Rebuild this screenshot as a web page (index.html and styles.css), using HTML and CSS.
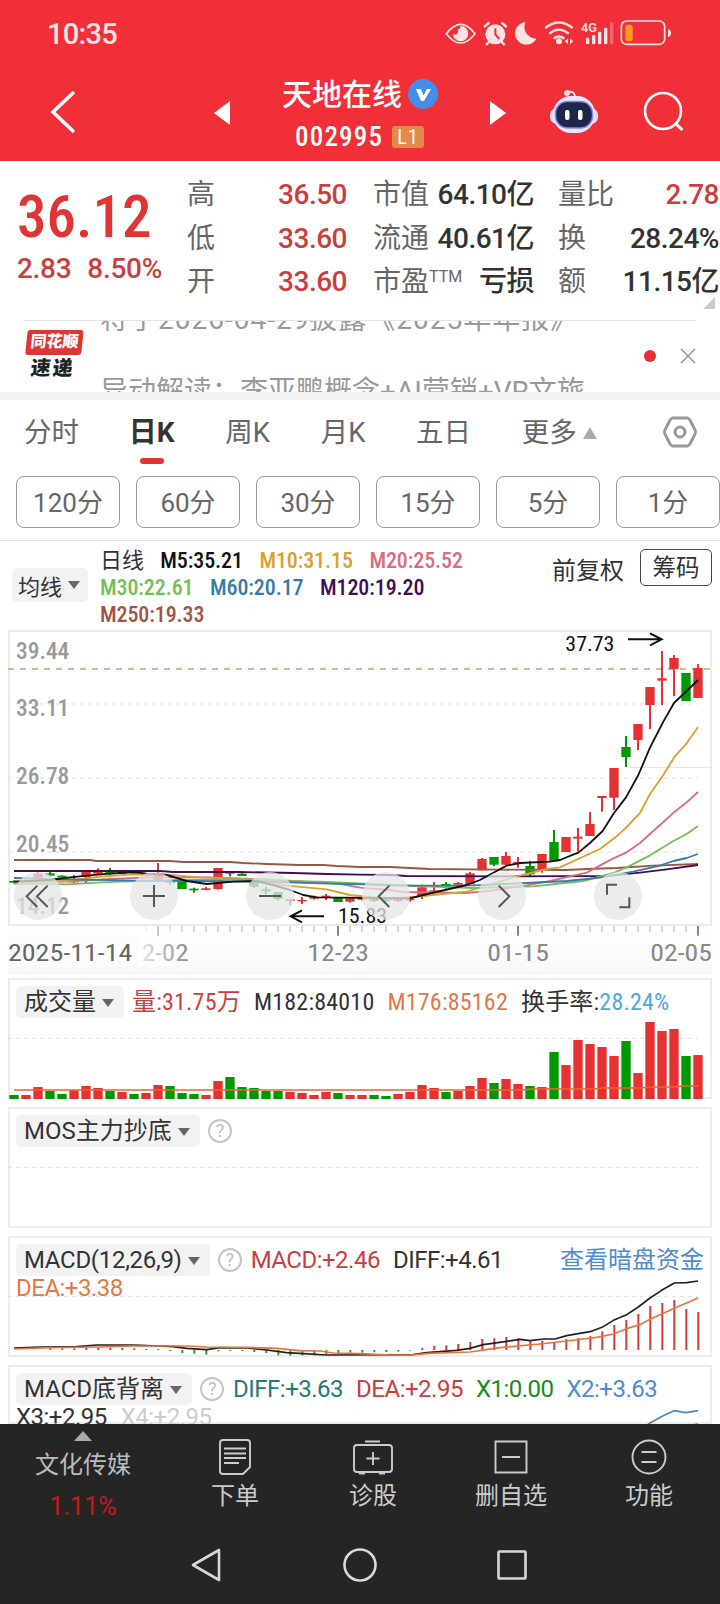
FILE: index.html
```html
<!DOCTYPE html>
<html lang="zh-CN">
<head>
    <meta charset="utf-8">
    <title>天地在线 002995</title>
    <link rel="stylesheet" href="styles.css">
</head>
<body>
    <header class="header">
        <div class="status-bar">
            <span class="clock">10:35</span>
            <svg class="status-icons" width="230" height="30" viewBox="0 0 690 90">
                <g fill="none" stroke="#ffe3e3" stroke-width="5">
                    <path d="M7 50Q50-6 93 50Q50 106 7 50z"/>
                    <path d="M304 33Q345 0 386 33M316 50Q345 26 374 50M329 65Q345 52 361 65" stroke-width="7"/>
                    <rect x="532" y="12" width="130" height="70" rx="16"/>
                </g>
                <g fill="#ffe3e3">
                    <path d="M50 27a23 23 0 1 1-23 23q7 5 13 0q5-8 1-15q8 4 9-8z"/>
                    <circle cx="154" cy="52" r="30"/>
                    <path d="M120 30l16-14M188 30l-16-14M136 74l-10 10M172 74l10 10" stroke="#ffe3e3" stroke-width="7"/>
                    <path d="M154 34v18l12 14" fill="none" stroke="#f12f38" stroke-width="6"/>
                    <path d="M244 15a34 34 0 1 0 33 50a36 36 0 0 1-33-50z"/>
                    <circle cx="345" cy="73" r="9"/>
                    <path d="M362 73l10-8v16zM388 73l-10-8v16z"/>
                    <rect x="426" y="62" width="10" height="20" rx="4"/>
                    <rect x="444" y="54" width="10" height="28" rx="4"/>
                    <rect x="462" y="44" width="10" height="38" rx="4"/>
                    <rect x="480" y="32" width="10" height="50" rx="4"/>
                    <rect x="498" y="16" width="10" height="66" rx="4" opacity=".3"/>
                    <path d="M672 36q9 2 9 12t-9 12z"/>
                    <text x="411" y="46" font-size="40" textLength="48" lengthAdjust="spacingAndGlyphs" font-weight="600">4G</text>
                </g>
                <rect x="544" y="23" width="22" height="50" rx="8" fill="#ff9a1f"/>
            </svg>
        </div>
        <div class="title-bar">
            <svg class="back" width="30" height="46" viewBox="0 0 30 46"><path d="M25 3L4 23L25 43" fill="none" stroke="#fff" stroke-width="3.6"/></svg>
            <svg class="prev" width="16" height="24" viewBox="0 0 16 24"><path d="M0 12L16 0v24z" fill="#fff"/></svg>
            <div class="stock">
                <div class="stock-name">天地在线
                    <svg width="30" height="30" viewBox="0 0 30 30"><circle cx="15" cy="15" r="15" fill="#438ee8"/><path d="M8 10h5l2.500 6.500L19 10h4l-7 12h-3z" fill="#fff"/></svg>
                </div>
                <div class="stock-code"><span>002995</span><span class="level">L1</span></div>
            </div>
            <svg class="next" width="16" height="24" viewBox="0 0 16 24"><path d="M16 12L0 0v24z" fill="#fff"/></svg>
            <svg class="robot" width="50" height="46" viewBox="0 0 50 46">
                <path d="M26 8q0-6-7-5" fill="none" stroke="#ffe0e4" stroke-width="2"/><circle cx="18" cy="4" r="3" fill="#ffd6dc"/>
                <rect x="1" y="19" width="48" height="16" rx="7" fill="#d9dcfb"/>
                <rect x="4" y="7" width="42" height="37" rx="18" fill="#e9e7fd"/>
                <rect x="6.500" y="12.500" width="37" height="26.500" rx="12" fill="#1d2748" stroke="#8d83f0" stroke-width="1.500"/>
                <rect x="16" y="21" width="4.500" height="10" rx="2" fill="#fff"/><rect x="29" y="21" width="4.500" height="10" rx="2" fill="#fff"/>
            </svg>
            <svg class="search" width="42" height="42" viewBox="0 0 42 42"><circle cx="20" cy="20" r="18" fill="none" stroke="#fff" stroke-width="2.600"/><path d="M32 32l7.500 7" stroke="#fff" stroke-width="3"/></svg>
        </div>
    </header>

    <section class="quote">
        <div class="price">
            <div class="last">36.12</div>
            <div class="change"><span>2.83</span><span>8.50%</span></div>
        </div>
        <dl class="stats stats-a">
            <dt>高</dt><dd class="up">36.50</dd>
            <dt>低</dt><dd class="up">33.60</dd>
            <dt>开</dt><dd class="up">33.60</dd>
        </dl>
        <dl class="stats stats-b">
            <dt>市值</dt><dd>64.10亿</dd>
            <dt>流通</dt><dd>40.61亿</dd>
            <dt>市盈<sup>TTM</sup></dt><dd>亏损</dd>
        </dl>
        <dl class="stats stats-c">
            <dt>量比</dt><dd class="up">2.78</dd>
            <dt>换</dt><dd>28.24%</dd>
            <dt>额</dt><dd>11.15亿</dd>
        </dl>
        <svg class="corner" width="12" height="12"><path d="M12 0v12H0z" fill="#ccc"/></svg>
    </section>

    <section class="news">
        <div class="news-logo"><span class="brand">同花顺</span><span class="express">速递</span></div>
        <div class="news-text">
            <p class="report">将于2026-04-29披露《2025年年报》</p>
            <p>异动解读：李亚鹏概念+AI营销+VR文旅</p>
        </div>
        <span class="dot"></span>
        <svg class="close" width="18" height="18"><path d="M2 2l14 14M16 2L2 16" stroke="#999" stroke-width="1.600"/></svg>
    </section>

    <nav class="tabs">
        <span>分时</span>
        <span class="active">日K</span>
        <span>周K</span>
        <span>月K</span>
        <span>五日</span>
        <span class="more">更多<svg width="14" height="12"><path d="M7 0l7 12H0z" fill="#aaa"/></svg></span>
        <svg class="settings" width="34" height="32" viewBox="0 0 34 32"><path d="M9.500 2h15l2.500 2l5 10q1 2 0 4l-5 10l-2.500 2h-15L7 28L2 18q-1-2 0-4L7 4z" fill="none" stroke="#999" stroke-width="2.800"/><circle cx="17" cy="16" r="5" fill="none" stroke="#999" stroke-width="3"/></svg>
    </nav>
    <div class="periods">
        <button>120分</button><button>60分</button><button>30分</button><button>15分</button><button>5分</button><button>1分</button>
    </div>

    <div class="ma-bar">
        <span class="pill">均线<i class="caret"></i></span>
        <div class="ma-values">
            <div><b>日线</b><span class="m5">M5:35.21</span><span class="m10">M10:31.15</span><span class="m20">M20:25.52</span></div>
            <div><span class="m30">M30:22.61</span><span class="m60">M60:20.17</span><span class="m120">M120:19.20</span></div>
            <div><span class="m250">M250:19.33</span></div>
        </div>
        <span class="adjust">前复权</span>
        <span class="chips">筹码</span>
    </div>

    <!-- charts use a 3x coordinate system, one candle every 36 units -->
    <svg id="kline" class="kline" width="720" height="348" viewBox="0 15 2160 1044"></svg>

    <section class="panel">
        <svg id="volume" class="chart" viewBox="24 24 2112 363"></svg>
        <div class="panel-head vol-head">
            <span class="pill">成交量<i class="caret"></i></span>
            <span class="up">量:31.75万</span><span>M182:84010</span><span class="orange">M176:85162</span><span>换手率:<em>28.24%</em></span>
        </div>
    </section>
    <section class="panel">
        <svg id="mos" class="chart" viewBox="24 411 2112 363"></svg>
        <div class="panel-head">
            <span class="pill">MOS主力抄底<i class="caret"></i></span><span class="help">?</span>
        </div>
    </section>
    <section class="panel">
        <svg id="macd" class="chart" viewBox="24 18 2112 363"></svg>
        <div class="panel-head macd-head">
            <span class="pill">MACD(12,26,9)<i class="caret"></i></span><span class="help">?</span>
            <span class="up">MACD:+2.46</span><span>DIFF:+4.61</span>
            <a class="link">查看暗盘资金</a>
            <span class="second-row orange">DEA:+3.38</span>
        </div>
    </section>
    <section class="panel panel-last">
        <svg id="diverge" class="chart" viewBox="24 405 2112 177"></svg>
        <div class="panel-head">
            <span class="pill">MACD底背离<i class="caret"></i></span><span class="help">?</span>
            <span class="teal">DIFF:+3.63</span><span class="up">DEA:+2.95</span><span class="down">X1:0.00</span><span class="blue">X2:+3.63</span>
            <span class="second-row">X3:+2.95<span class="faint">X4:+2.95</span></span>
        </div>
    </section>

    <footer class="footer">
        <div class="toolbar">
            <div class="sector">
                <svg width="18" height="10"><path d="M9 0l9 10H0z" fill="#aaa"/></svg>
                <span>文化传媒</span>
                <span class="sector-change">1.11%</span>
            </div>
            <div class="tool">
                <svg width="36" height="36" viewBox="0 0 36 36"><path d="M6 1h24q3 0 3 3v24l-7 7H6q-3 0-3-3V4q0-3 3-3zM7 9.500h22M7 14.500h22M7 19h22M7 24h15"/></svg>
                <span>下单</span>
            </div>
            <div class="tool">
                <svg width="40" height="36" viewBox="0 0 40 36"><path d="M12 2.500h15M4 6h32q3 0 3 3v21q0 3-3 3H4q-3 0-3-3V9q0-3 3-3zM20 13v13M13.500 19.500h13M6 34.500h6M26 34.500h6"/></svg>
                <span>诊股</span>
            </div>
            <div class="tool">
                <svg width="36" height="36" viewBox="0 0 36 36"><path d="M2.500 2.500h31v31h-31zM9 18h18"/></svg>
                <span>删自选</span>
            </div>
            <div class="tool">
                <svg width="36" height="36" viewBox="0 0 36 36"><circle cx="18" cy="18" r="16.500"/><path d="M10.500 13h15M10.500 23h15"/></svg>
                <span>功能</span>
            </div>
        </div>
        <div class="nav-keys">
            <svg width="36" height="36" viewBox="0 0 36 36"><path d="M3 18L29 3v30z"/></svg>
            <svg width="36" height="36" viewBox="0 0 36 36"><circle cx="18" cy="18" r="15.500"/></svg>
            <svg width="36" height="36" viewBox="0 0 36 36"><rect x="4.500" y="4.500" width="27" height="27" rx="1"/></svg>
        </div>
    </footer>

    <script src="charts.js"></script>
</body>
</html>
```
FILE: charts.js
```js
const RED = "#e43131";
const GREEN = "#009a00";

// x of the n-th candle
const cx = (n) => 42 + 36 * n;

const line = (points, color, width = 5) =>
    `<polyline points="${points}" fill="none" stroke="${color}" stroke-width="${width}" stroke-linejoin="round"/>`;

const dash = (y, from = 24) =>
    `<path d="M${from} ${y}H2094" stroke="#ddd" stroke-width="3" stroke-dasharray="12 12"/>`;

const text = (str, x, y, width, color, size = 69, weight = 400) =>
    `<text x="${x}" y="${y}" textLength="${width}" lengthAdjust="spacingAndGlyphs" fill="${color}" font-size="${size}" font-weight="${weight}">${str}</text>`;

// [direction, high, body top, body bottom, low]
const candles = [
    ["g", 766, 768, 773, 775], ["r", 764, 766, 772, 774], ["r", 740, 746, 758, 762], ["g", 740, 745, 752, 756],
    ["g", 751, 752, 758, 758], ["r", 750, 765, 772, 773], ["r", 739, 739, 756, 774], ["r", 730, 740, 746, 750],
    ["g", 729, 737, 745, 750], ["r", 740, 741, 747, 748], ["g", 738, 740, 746, 750], ["r", 745, 748, 753, 758],
    ["r", 714, 744, 764, 766], ["g", 764, 768, 773, 779], ["g", 771, 771, 792, 792], ["g", 788, 791, 796, 803],
    ["r", 786, 790, 795, 796], ["r", 729, 729, 792, 794], ["g", 740, 741, 746, 754], ["g", 745, 746, 753, 753],
    ["g", 765, 765, 785, 789], ["g", 785, 793, 799, 808], ["g", 801, 801, 822, 826], ["r", 822, 823, 828, 840],
    ["r", 816, 825, 829, 837], ["r", 812, 815, 821, 824], ["r", 807, 812, 818, 825], ["g", 818, 818, 831, 831],
    ["r", 820, 820, 830, 833], ["r", 816, 819, 824, 826], ["g", 820, 822, 828, 831], ["g", 820, 822, 828, 831],
    ["r", 818, 822, 828, 831], ["r", 813, 822, 826, 830], ["r", 779, 787, 814, 822], ["r", 771, 796, 801, 801],
    ["g", 771, 777, 787, 791], ["r", 771, 774, 779, 784], ["r", 741, 745, 778, 778], ["r", 699, 702, 736, 736],
    ["g", 696, 696, 719, 723], ["r", 681, 693, 719, 721], ["r", 696, 711, 717, 728], ["g", 708, 723, 748, 754],
    ["r", 687, 687, 732, 743], ["g", 615, 651, 708, 708], ["r", 636, 636, 681, 681], ["r", 609, 635, 641, 678],
    ["r", 561, 597, 633, 633], ["r", 513, 513, 519, 560], ["r", 429, 429, 518, 555], ["g", 333, 366, 396, 426],
    ["r", 297, 297, 345, 375], ["r", 186, 186, 240, 312], ["r", 78, 160, 167, 240], ["r", 90, 99, 132, 213],
    ["g", 144, 144, 228, 228], ["r", 117, 129, 219, 219]
];

const averages = [
    ["#985848", "42,705 270,705 290,708 510,708 550,711 690,711 730,714 800,717 900,720 970,720 1010,723 1080,726 1170,726 1290,732 1500,734 1700,735 1760,732 1850,729 1960,722 2094,717"],
    ["#410f50", "42,738 480,738 520,741 720,741 880,744 980,747 1080,749 1170,750 1220,753 1500,754 1820,753 1920,743 2000,733 2094,720"],
    ["#db6c80", "42,770 200,770 330,762 450,757 620,757 720,760 880,768 1010,775 1080,788 1170,795 1210,801 1400,804 1480,796 1580,781 1650,768 1760,743 1840,700 1880,682 1920,654 1990,591 2024,560 2060,532 2094,501"],
    ["#dca02c", "42,772 200,768 300,755 400,748 500,749 600,757 720,762 810,772 860,782 980,793 1050,810 1080,813 1170,822 1240,816 1400,800 1480,775 1560,752 1640,732 1680,727 1760,690 1800,672 1850,634 1880,606 1920,564 1950,507 1990,450 2024,395 2060,355 2094,306"],
    ["#74bd57", "42,776 200,778 290,773 360,770 550,765 760,763 830,768 960,770 1080,775 1250,783 1420,789 1600,784 1750,768 1840,744 1880,727 1950,691 2020,648 2060,627 2094,603"],
    ["#387aaa", "42,759 150,762 250,764 400,767 560,768 800,770 960,775 1080,778 1220,782 1420,781 1580,774 1700,768 1800,758 1900,740 1980,722 2020,708 2060,699 2094,687"],
    ["#111", "42,770 150,765 210,757 300,748 400,741 440,746 500,750 560,768 620,777 700,770 770,768 830,783 870,795 910,810 950,817 1230,820 1270,810 1400,780 1440,765 1490,738 1520,722 1560,714 1650,710 1680,705 1736,682 1770,654 1808,618 1842,564 1878,517 1915,450 1950,368 1990,290 2022,234 2060,198 2094,165"]
];

const renderKline = () => {
    let out = `<defs>
        <linearGradient id="axis" x2="0" y2="1"><stop offset="0" stop-color="#fff"/><stop offset="1" stop-color="#f8f8f8"/></linearGradient>
        <linearGradient id="fade"><stop offset="0" stop-color="#fff"/><stop offset="1" stop-color="#fff" stop-opacity="0"/></linearGradient>
    </defs>`;
    out += `<rect x="24" y="903" width="2112" height="147" fill="url(#axis)"/>`;
    out += `<rect x="27" y="18" width="2106" height="882" fill="none" stroke="#eaeaea" stroke-width="6"/>`;
    [237, 459, 681].forEach(y => {
        out += `<path d="M24 ${y}H2094" stroke="#eaeaea" stroke-width="5" stroke-dasharray="12 12"/>`;
    });
    out += `<path d="M24 132H2130" stroke="#c3a36d" stroke-width="5" stroke-dasharray="18 18"/>`;
    out += `<path d="M1890 427H2136" stroke="#e0e0e0" stroke-width="3"/>`;
    [["39.44", 102], ["33.11", 273], ["26.78", 477], ["20.45", 681], ["14.12", 866]].forEach(([str, y]) => {
        out += text(str, 48, y, 160, "#999", 70, 500);
    });

    candles.forEach(([dir, high, top, bottom, low], i) => {
        const color = dir === "r" ? RED : GREEN;
        out += `<rect x="${cx(i) - 3}" y="${high}" width="6" height="${low - high}" fill="${color}"/>`;
        out += `<rect x="${cx(i) - 14}" y="${top}" width="28" height="${bottom - top}" fill="${color}"/>`;
    });
    averages.forEach(([color, points]) => {
        out += line(points, color, 5.5);
    });

    out += text("37.73", 1696, 78, 147, "#111", 62, 400);
    out += text("15.83", 1014, 893, 147, "#111", 62, 400);
    out += `<path d="M1884 43H1985M1950 25L1985 43L1950 61M972 874H872M906 856L872 874L906 892" fill="none" stroke="#111" stroke-width="6"/>`;

    // round control buttons over the chart
    const icons = [
        "M112 782L80 814L112 846M143 782L111 814L143 846", "M429 813H495M462 780V846", "M777 813H843",
        "M1168 782L1136 814L1168 846", "M1496 782L1528 814L1496 846", "M1821 809V779H1851M1888 817V847H1858"
    ];
    icons.forEach((d, i) => {
        out += `<circle cx="${114 + 348 * i}" cy="813" r="72" fill="#e6e6e6" fill-opacity=".75"/>`;
        out += `<path d="${d}" fill="none" stroke="#555" stroke-width="6"/>`;
    });

    // time axis
    for (let i = 11; i < 58; i++) {
        const major = (i - 12) % 15 === 0;
        out += `<path d="M${cx(i)} 903V${major ? 932 : 920}" stroke="${major ? "#888" : "#aaa"}" stroke-width="${major ? 6 : 3}"/>`;
    }
    out += text("12-02", 385, 1008, 181, "#888");
    out += `<rect x="380" y="903" width="190" height="120" fill="url(#fade)"/><rect x="24" y="935" width="393" height="90" fill="#fcfcfc"/>`;
    out += text("2025-11-14", 24, 1008, 373, "#666");
    out += text("12-23", 922, 1008, 185, "#888");
    out += text("01-15", 1462, 1008, 185, "#888");
    out += text("02-05", 1951, 1008, 185, "#888");
    document.getElementById("kline").innerHTML = out;
};

const volumeTops = [
    375, 375, 351, 363, 372, 361, 348, 354, 363, 366, 372, 369, 345, 348, 369, 372, 375, 333, 321, 351,
    354, 363, 363, 366, 369, 375, 366, 369, 375, 375, 375, 378, 372, 366, 345, 354, 366, 363, 348, 324,
    339, 327, 342, 348, 351, 246, 285, 210, 222, 231, 258, 213, 309, 156, 183, 177, 258, 255
];

const renderVolume = () => {
    let out = dash(205);
    volumeTops.forEach((top, i) => {
        const color = candles[i][0] === "r" ? RED : GREEN;
        out += `<rect x="${cx(i) - 14}" y="${top}" width="28" height="${387 - top}" fill="${color}"/>`;
    });
    out += line("42,360 1560,360 1600,357 1780,357 1810,354 1920,354 1950,351 2020,351 2050,348 2094,348", "#f0622f");
    document.getElementById("volume").innerHTML = out;
};

// histogram ends, bars start at the zero line
const macdBars = [
    null, null, null, 355, 355, 355, 354, 354, 354, 354, 355, 357, 357, 363, 369, 371, 374, 364, 363, 363,
    366, 369, 376, 377, 376, 376, 372, 370, 368, 368, 367, 366, 365, 362, 354, 347, 346, 342, 336, 327,
    325, 321, 325, 334, 332, 338, 327, 324, 318, 304, 285, 270, 252, 228, 219, 210, 237, 246
];

const renderMacd = () => {
    let out = dash(199);
    macdBars.forEach((end, i) => {
        if (end === null) return;
        out += `<path d="M${cx(i) + 1} 360V${end}" stroke="${end < 360 ? "#cf3b3b" : "#2e992e"}" stroke-width="6"/>`;
    });
    out += line("42,354 120,351 230,350 290,345 400,345 480,348 520,350 560,355 620,359 660,353 740,354 800,360 860,368 910,371 980,375 1240,374 1280,368 1370,361 1410,355 1450,344 1520,334 1560,328 1590,332 1630,327 1665,327 1700,317 1770,305 1810,290 1840,271 1880,254 1915,231 1950,204 1985,181 2023,159 2060,158 2094,153", "#222");
    out += line("42,357 150,353 300,351 400,348 560,348 620,351 740,352 830,355 900,362 960,363 1000,369 1080,371 1170,375 1230,375 1290,370 1410,366 1500,353 1620,342 1700,333 1790,322 1840,312 1880,296 1920,284 1950,268 2023,235 2094,204", "#e8743b");
    document.getElementById("macd").innerHTML = out;
};

renderKline();
renderVolume();
renderMacd();
document.getElementById("mos").innerHTML = dash(592);
document.getElementById("diverge").innerHTML =
    line("1937,582 1950,573 1988,552 2022,536 2058,542 2094,536", "#4a86c5") +
    line("2062,582 2094,575", "#888", 4);
```
FILE: styles.css
```css
* {
    box-sizing: border-box;
}
body {
    margin: 0;
    width: 720px;
    height: 1604px;
    overflow: hidden;
    background: #fff;
    color: #333;
    font-family: Roboto, "Noto Sans CJK SC", sans-serif;
    display: flex;
    flex-direction: column;
}
svg {
    display: block;
    flex: none;
}
p, dl, dd {
    margin: 0;
}
em, i, b {
    font-style: normal;
    font-weight: inherit;
}
.up {
    color: #c93e3e;
}
.down {
    color: #188c18;
}
.orange {
    color: #e07848;
}
.teal {
    color: #24787f;
}
.blue {
    color: #508ad0;
}

/* header */
.header {
    height: 161px;
    background: #f12f38;
    color: #fff;
    flex: none;
}
.status-bar {
    height: 68px;
    padding: 17px 46px 0 47px;
    display: flex;
    justify-content: space-between;
}
.clock {
    font-size: 29px;
    line-height: 34px;
    font-weight: 500;
    letter-spacing: -0.7px;
    color: #ffe3e3;
}
.title-bar {
    display: flex;
    align-items: center;
    height: 88px;
}
.back {
    margin-left: 49px;
}
.prev {
    margin-left: 135px;
    margin-top: 2px;
}
.stock {
    width: 170px;
    margin-left: 46px;
    padding-top: 9px;
    display: flex;
    flex-direction: column;
}
.stock-name {
    display: flex;
    align-items: center;
    gap: 6px;
    padding-left: 6px;
    font-size: 30px;
    line-height: 42px;
    font-weight: 500;
    white-space: nowrap;
}
.stock-name svg {
    margin-top: -2px;
}
.stock-code {
    display: flex;
    align-items: center;
    gap: 9px;
    padding-left: 19px;
    font-size: 27px;
    line-height: 43px;
    font-weight: 500;
    font-stretch: 87%;
    letter-spacing: 1.2px;
}
.level {
    width: 32px;
    height: 22px;
    border-radius: 3px;
    background: #e18b4c;
    font-size: 20px;
    font-weight: 400;
    line-height: 22px;
    text-align: center;
    margin-top: -1px;
}
.next {
    margin-left: 44px;
    margin-top: 2px;
}
.robot {
    margin-left: 43px;
}
.search {
    margin-left: 44px;
}

/* quote */
.quote {
    height: 159px;
    flex: none;
    display: flex;
    position: relative;
}
.price {
    width: 187px;
    padding: 22px 0 0 17px;
    color: #df3535;
}
.last {
    font-size: 59px;
    font-weight: 500;
    font-stretch: 87%;
    line-height: 68px;
}
.change {
    display: flex;
    gap: 16px;
    font-size: 28px;
    font-weight: 500;
    line-height: 36px;
    letter-spacing: -0.3px;
    color: #c93e3e;
}
.stats {
    display: grid;
    grid-template-columns: 0 1fr;
    grid-auto-rows: 43.5px;
    align-content: start;
    padding-top: 12px;
    line-height: 43.5px;
    font-size: 28px;
    white-space: nowrap;
}
.stats dt {
    color: #666;
}
.stats dd {
    text-align: right;
    font-weight: 500;
    letter-spacing: -0.5px;
}
.stats sup {
    font-size: 16px;
    line-height: 0;
    vertical-align: 9px;
}
.stats-a {
    width: 160px;
}
.stats-b {
    width: 161px;
    margin-left: 26px;
}
.stats-c {
    width: 161px;
    margin-left: 24px;
}
.corner {
    position: absolute;
    right: 5px;
    bottom: 11px;
}

/* news */
.news {
    height: 80px;
    flex: none;
    display: flex;
    align-items: center;
    position: relative;
    border-bottom: 8px solid #f3f3f3;
    overflow: hidden;
}
.news::before {
    content: "";
    position: absolute;
    left: 24px;
    right: 24px;
    top: 0;
    height: 1px;
    background: #e4e4e4;
}
.news-logo {
    margin-left: 25px;
    width: 75px;
    display: flex;
    flex-direction: column;
    font-weight: 900;
    transform: skewX(-6deg);
}
.brand {
    width: 56px;
    height: 25px;
    border-radius: 3px;
    background: #e03535;
    color: #fff;
    font-size: 16px;
    line-height: 24px;
    text-align: center;
}
.express {
    padding-left: 7px;
    font-size: 20px;
    line-height: 27px;
    letter-spacing: 2px;
    color: #222;
}
.news-text {
    flex: 1;
    font-size: 28px;
    line-height: 72px;
    color: #999;
    white-space: nowrap;
}
.report {
    letter-spacing: 1px;
}
.dot {
    width: 12px;
    height: 12px;
    border-radius: 50%;
    background: #e23131;
}
.close {
    margin: 0 23px 0 23px;
}

/* tabs */
.tabs {
    height: 76px;
    flex: none;
    display: flex;
    padding: 11px 23px 0 24px;
    font-size: 27.5px;
    line-height: 44px;
    color: #666;
    white-space: nowrap;
}
.tabs span {
    margin-right: 50.7px;
}
.tabs .more {
    display: flex;
    align-items: center;
    gap: 6px;
    height: 44px;
    margin-right: 0;
}
.tabs .active {
    margin-left: -1px;
    color: #333;
    font-size: 28px;
    font-weight: 700;
}
.active::after {
    content: "";
    display: block;
    width: 24px;
    height: 6px;
    margin: 3px auto 0;
    border-radius: 3px;
    background: #df3535;
}
.settings {
    margin-left: auto;
    margin-top: 5px;
}
.periods {
    height: 65px;
    flex: none;
    padding-left: 16px;
    display: flex;
    gap: 16px;
    border-bottom: 1px solid #e4e4e4;
}
.periods button {
    width: 104px;
    height: 52px;
    flex: none;
    padding: 0 0 3px;
    border: 1px solid #999;
    border-radius: 8px;
    background: #fff;
    color: #666;
    font-family: inherit;
    font-size: 26px;
}

/* moving averages */
.ma-bar {
    height: 89px;
    flex: none;
    display: flex;
    padding: 6px 8px 0 12px;
}
.pill {
    display: flex;
    align-items: center;
    gap: 6px;
    border-radius: 5px;
    background: #f2f2f2;
    color: #333;
}
.ma-bar .pill {
    width: 76px;
    height: 34px;
    margin-top: 21px;
    padding: 0 0 1px 6px;
    font-size: 22px;
}
.caret {
    flex: none;
    border: 6px solid transparent;
    border-top: 8px solid #666;
    border-bottom: 0;
}
.ma-values {
    width: 464px;
    padding-left: 12px;
    font-size: 22px;
    line-height: 27px;
    font-weight: 500;
    font-stretch: 87%;
    letter-spacing: -0.1px;
}
.ma-values div {
    display: flex;
    gap: 16.5px;
}
.ma-values b {
    font-weight: 400;
}
.m5 { color: #111; }
.m10 { color: #dca02c; }
.m20 { color: #db6c80; }
.m30 { color: #74bd57; }
.m60 { color: #387aaa; }
.m120 { color: #410f50; }
.m250 { color: #a05443; }
.adjust {
    width: 88px;
    font-size: 24px;
    line-height: 48px;
    white-space: nowrap;
}
.chips {
    width: 72px;
    height: 37px;
    margin-top: 2px;
    border: 1px solid #444;
    border-radius: 5px;
    font-size: 23.5px;
    line-height: 37px;
    text-align: center;
}
.kline {
    font-family: Roboto, sans-serif;
    font-stretch: 87%;
}

/* indicator panels */
.panel {
    display: grid;
    flex: none;
    width: 704px;
    height: 121px;
    margin: 0 0 8px 8px;
    box-shadow: inset 0 0 0 2px #ececec;
}
.panel > * {
    grid-area: 1 / 1;
}
.chart {
    width: 704px;
    height: 100%;
}
.panel-last {
    height: 59px;
    margin-bottom: 0;
    overflow: hidden;
}
.panel-head {
    display: flex;
    flex-wrap: wrap;
    align-content: flex-start;
    gap: 0 13px;
    padding: 8px 8px 0 8px;
    font-size: 24px;
    line-height: 33px;
    letter-spacing: -0.5px;
    white-space: nowrap;
}
.panel-head .pill {
    height: 32px;
    padding: 1px 10px 0 8px;
    margin-right: -5px;
    letter-spacing: 0;
}
.macd-head .pill {
    letter-spacing: -0.3px;
}
.panel-head em {
    color: #4fa7dc;
}
.vol-head {
    font-stretch: 87%;
    letter-spacing: 0.2px;
}
.vol-head .pill {
    margin-right: -5px;
}
.help {
    width: 24px;
    height: 24px;
    margin: 4px -4px 0 0;
    border: 2px solid #c4c4c4;
    border-radius: 50%;
    color: #bbb;
    font-size: 18px;
    line-height: 20px;
    text-align: center;
}
.link {
    margin-left: auto;
    letter-spacing: 0;
    color: #508ad0;
}
.second-row {
    width: 100%;
    line-height: 22px;
}
.faint {
    margin-left: 14px;
    color: #ccc;
}

/* bottom bars */
.footer {
    flex: 1;
    background: #252525;
    color: #ccc;
}
.toolbar {
    height: 104px;
    display: flex;
    font-size: 24px;
}
.sector {
    width: 166px;
    padding-top: 7px;
    display: flex;
    flex-direction: column;
    align-items: center;
    line-height: 42px;
    color: #bbb;
}
.sector > span:first-of-type {
    line-height: 49px;
}
.sector-change {
    font-size: 25px;
    line-height: 34px;
    color: #c81818;
}
.tool {
    width: 138px;
    padding-top: 15px;
    display: flex;
    flex-direction: column;
    align-items: center;
    line-height: 42px;
}
.tool svg {
    fill: none;
    stroke: #ccc;
    stroke-width: 1.9;
}
.nav-keys {
    display: flex;
    justify-content: center;
    gap: 116px;
    padding-top: 19px;
}
.nav-keys svg {
    fill: none;
    stroke: #d8d8d8;
    stroke-width: 2.6;
    stroke-linejoin: round;
}
```
